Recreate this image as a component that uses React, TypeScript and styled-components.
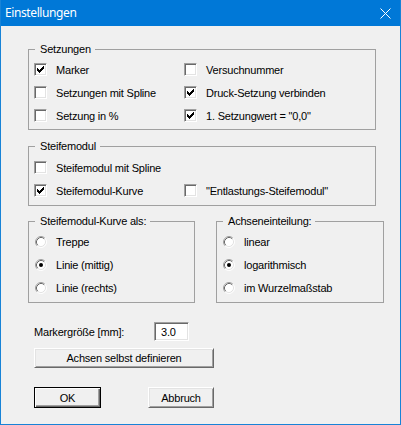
import React from "react";
import styled, { createGlobalStyle } from "styled-components";

const GlobalStyle = createGlobalStyle`
  html, body { margin: 0; padding: 0; background: #f0f0f0; }
  body { font-family: "Liberation Sans", Arial, sans-serif; }
`;

const Window = styled.div`
  width: 401px;
  height: 425px;
  box-sizing: border-box;
  border: 1px solid #1883d7;
  border-top: none;
  display: flex;
  flex-direction: column;
  background: #f0f0f0;
`;

const TitleBar = styled.div`
  flex: none;
  height: 26px;
  background: #0078d7;
  color: #fff;
  display: flex;
  align-items: center;
  justify-content: space-between;
  padding: 0 9px 0 4px;
  font-family: "Noto Sans", "Liberation Sans", sans-serif;
  font-size: 12px;
  letter-spacing: -0.4px;
  line-height: 26px;
`;

const CloseIcon = styled.svg`
  display: block;
  width: 11px;
  height: 11px;
`;

const Body = styled.div`
  flex: 1;
  padding: 17px 0 0 27px;
  display: flex;
  flex-direction: column;
  align-items: flex-start;
  font-size: 11px;
  letter-spacing: -0.2px;
  color: #000;
`;

const Group = styled.fieldset<{ $w: number; $mt: number; $pt: number; $pb: number }>`
  box-sizing: border-box;
  width: ${(p) => p.$w}px;
  min-width: 0;
  margin: ${(p) => p.$mt}px 0 0 0;
  padding: ${(p) => p.$pt}px 0 ${(p) => p.$pb}px 5px;
  border: 1px solid #a0a0a0;
`;

const Legend = styled.legend`
  margin-left: 1px;
  padding: 0 4px 0 5px;
  line-height: 13px;
  font-size: 11px;
`;

const CheckGrid = styled.div`
  display: grid;
  grid-template-columns: 150px 1fr;
  grid-auto-rows: 23px;
`;

const RadioList = styled.div`
  display: grid;
  grid-auto-rows: 23px;
  padding-left: 1px;
`;

const Item = styled.label`
  display: flex;
  align-items: center;
  gap: 9px;
  white-space: nowrap;
`;

const Box = styled.span`
  flex: none;
  box-sizing: border-box;
  width: 13px;
  height: 13px;
  background: #fff;
  border: 1px solid;
  border-color: #a0a0a0 #fff #fff #a0a0a0;
  box-shadow: inset 1px 1px #696969, inset -1px -1px #e3e3e3;
  padding: 2px 0 0 2px;
`;

const CheckMark = styled.svg`
  display: block;
  width: 7px;
  height: 7px;
`;

const RadioIcon = styled.svg`
  display: block;
  flex: none;
  width: 12px;
  height: 12px;
`;

const LowerRow = styled.div`
  display: flex;
  gap: 21px;
  margin-top: 9px;
`;

const FieldRow = styled.div`
  display: flex;
  align-items: center;
  margin: 19px 0 0 6px;
`;

const FieldLabel = styled.span`
  width: 120px;
`;

const Input = styled.input`
  box-sizing: border-box;
  width: 35px;
  height: 19px;
  margin: 0;
  padding: 0 0 0 6px;
  border: 1px solid;
  border-color: #a0a0a0 #fff #fff #a0a0a0;
  box-shadow: inset 1px 1px #696969, inset -1px -1px #e3e3e3;
  background: #fff;
  font-family: "Liberation Sans", Arial, sans-serif;
  font-size: 11px;
  letter-spacing: -0.2px;
  color: #000;
  outline: none;
`;

const Button = styled.button<{ $w: number; $h: number; $default?: boolean }>`
  box-sizing: border-box;
  width: ${(p) => p.$w}px;
  height: ${(p) => p.$h}px;
  margin: 0;
  padding: 0;
  background: #f0f0f0;
  font-family: "Liberation Sans", Arial, sans-serif;
  font-size: 11px;
  letter-spacing: -0.2px;
  color: #000;
  border: 1px solid;
  border-color: ${(p) => (p.$default ? "#000" : "#fff #696969 #696969 #fff")};
  box-shadow: ${(p) =>
    p.$default
      ? "inset 1px 1px #fff, inset -1px -1px #696969, inset -2px -2px #a0a0a0"
      : "inset 1px 1px #e3e3e3, inset -1px -1px #a0a0a0"};
`;

const WideButton = styled(Button)`
  margin: 7px 0 0 6px;
`;

const ButtonRow = styled.div`
  display: flex;
  gap: 47px;
  margin: 19px 0 0 6px;
`;

// classic 7x7 tick, drawn column by column (3px high strokes)
const tickTops = [2, 3, 4, 3, 2, 1, 0];

function CheckBox({ checked, label }: { checked?: boolean; label: string }) {
  return (
    <Item>
      <Box>
        {checked && (
          <CheckMark viewBox="0 0 7 7" shapeRendering="crispEdges">
            {tickTops.map((y, x) => (
              <rect key={x} x={x} y={y} width={1} height={3} fill="#000" />
            ))}
          </CheckMark>
        )}
      </Box>
      {label}
    </Item>
  );
}

function Radio({ checked, label }: { checked?: boolean; label: string }) {
  return (
    <Item>
      <RadioIcon viewBox="0 0 12 12">
        <circle cx="6" cy="6" r="5" fill="#fff" />
        <path d="M2.11 9.89 A5.5 5.5 0 0 1 9.89 2.11" fill="none" stroke="#a0a0a0" strokeWidth="1" />
        <path d="M9.89 2.11 A5.5 5.5 0 0 1 2.11 9.89" fill="none" stroke="#ffffff" strokeWidth="1" />
        <path d="M2.82 9.18 A4.5 4.5 0 0 1 9.18 2.82" fill="none" stroke="#696969" strokeWidth="1" />
        <path d="M9.18 2.82 A4.5 4.5 0 0 1 2.82 9.18" fill="none" stroke="#e3e3e3" strokeWidth="1" />
        {checked && <circle cx="6" cy="6" r="2" fill="#000" />}
      </RadioIcon>
      {label}
    </Item>
  );
}

export default function App() {
  return (
    <>
      <GlobalStyle />
      <Window>
        <TitleBar>
          <span>Einstellungen</span>
          <CloseIcon viewBox="0 0 11 11">
            <path d="M0.5 0.5 L10.5 10.5 M10.5 0.5 L0.5 10.5" stroke="#fff" strokeWidth="1" />
          </CloseIcon>
        </TitleBar>
        <Body>
          <Group $w={348} $mt={0} $pt={2} $pb={2}>
            <Legend>Setzungen</Legend>
            <CheckGrid>
              <CheckBox checked label="Marker" />
              <CheckBox label="Versuchnummer" />
              <CheckBox label="Setzungen mit Spline" />
              <CheckBox checked label="Druck-Setzung verbinden" />
              <CheckBox label="Setzung in %" />
              <CheckBox checked label={'1. Setzungwert = "0,0"'} />
            </CheckGrid>
          </Group>

          <Group $w={348} $mt={10} $pt={3} $pb={3}>
            <Legend>Steifemodul</Legend>
            <CheckGrid>
              <CheckBox label="Steifemodul mit Spline" />
              <span />
              <CheckBox checked label="Steifemodul-Kurve" />
              <CheckBox label={'"Entlastungs-Steifemodul"'} />
            </CheckGrid>
          </Group>

          <LowerRow>
            <Group $w={167} $mt={0} $pt={2} $pb={3}>
              <Legend>Steifemodul-Kurve als:</Legend>
              <RadioList>
                <Radio label="Treppe" />
                <Radio checked label="Linie (mittig)" />
                <Radio label="Linie (rechts)" />
              </RadioList>
            </Group>
            <Group $w={168} $mt={0} $pt={2} $pb={3}>
              <Legend>Achseneinteilung:</Legend>
              <RadioList>
                <Radio label="linear" />
                <Radio checked label="logarithmisch" />
                <Radio label="im Wurzelmaßstab" />
              </RadioList>
            </Group>
          </LowerRow>

          <FieldRow>
            <FieldLabel>Markergröße [mm]:</FieldLabel>
            <Input defaultValue="3.0" readOnly />
          </FieldRow>

          <WideButton $w={180} $h={20}>Achsen selbst definieren</WideButton>

          <ButtonRow>
            <Button $w={67} $h={21} $default>OK</Button>
            <Button $w={66} $h={21}>Abbruch</Button>
          </ButtonRow>
        </Body>
      </Window>
    </>
  );
}
